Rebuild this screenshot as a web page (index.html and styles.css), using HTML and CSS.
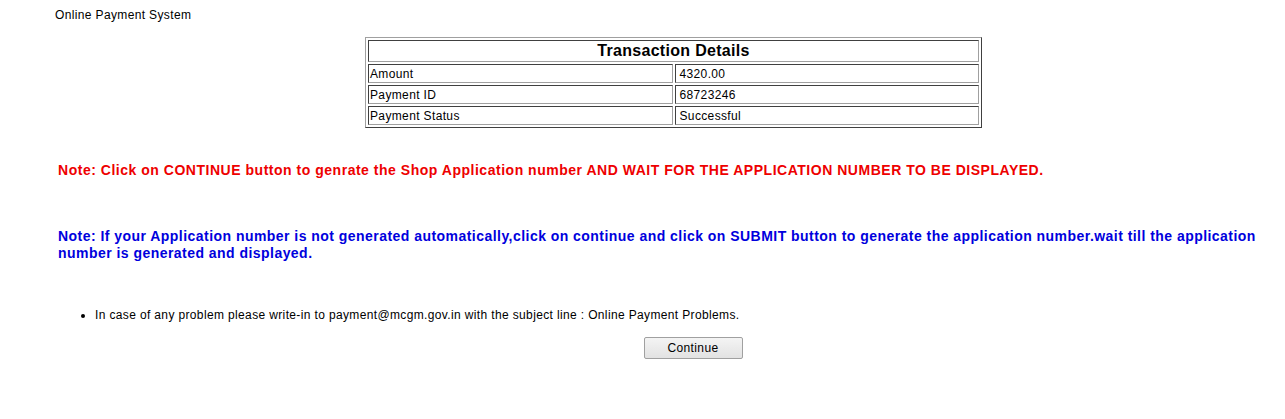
FILE: index.html
```html
<!DOCTYPE html>
<html>
<head>
<meta charset="utf-8">
<title>Online Payment System</title>
<link rel="stylesheet" href="styles.css">
</head>
<body>
<div class="page">
  <div class="header">Online Payment System</div>
  <div class="table-wrap">
    <table class="details">
      <tr><th colspan="2" class="title">Transaction Details</th></tr>
      <tr><td class="label">Amount</td><td class="value">4320.00</td></tr>
      <tr><td class="label">Payment ID</td><td class="value">68723246</td></tr>
      <tr><td class="label">Payment Status</td><td class="value">Successful</td></tr>
    </table>
  </div>
  <p class="note red">Note: Click on CONTINUE button to genrate the Shop Application number AND WAIT FOR THE APPLICATION NUMBER TO BE DISPLAYED.</p>
  <p class="note blue">Note: If your Application number is not generated automatically,click on continue and click on SUBMIT button to generate the application number.wait till the application number is generated and displayed.</p>
  <ul class="info">
    <li>In case of any problem please write-in to payment@mcgm.gov.in with the subject line : Online Payment Problems.</li>
  </ul>
  <div class="actions"><button class="btn">Continue</button></div>
</div>
</body>
</html>
```
FILE: styles.css
```css
html, body {
  margin: 0;
  padding: 0;
  background: #ffffff;
}
body {
  font-family: "Liberation Sans", Arial, sans-serif;
  font-size: 12px;
  letter-spacing: 0.36px;
  color: #000;
}
.page {
  padding: 8px 20px 0 55px;
}
.header {
  font-size: 12px;
  line-height: 14px;
}
.table-wrap {
  display: flex;
  justify-content: center;
  margin-top: 15px;
}
.details {
  width: 617px;
  border-collapse: separate;
  border-spacing: 2px;
  border: 1px solid;
  border-color: #a0a0a0 #404040 #404040 #a0a0a0;
  margin-left: 27px;
  table-layout: fixed;
}
.details th, .details td {
  border: 1px solid;
  border-color: #404040 #a0a0a0 #a0a0a0 #404040;
  padding: 1px 1px 0;
  text-align: left;
  font-weight: normal;
  height: 16px;
  line-height: 16px;
}
.details th.title {
  text-align: center;
  font-weight: bold;
  font-size: 16px;
  letter-spacing: 0.3px;
  padding: 0 1px;
  height: 20px;
  line-height: 20px;
}
.details td.value { padding-left: 4px; }
.note {
  font-weight: bold;
  font-size: 14px;
  line-height: 17px;
  letter-spacing: 0.52px;
  margin: 0;
  padding-left: 3px;
}
.red {
  color: #ee0000;
  margin-top: 34px;
}
.blue {
  color: #0000dd;
  margin-top: 49px;
  margin-right: -12px;
  letter-spacing: 0.46px;
}
.info {
  margin: 46px 0 0 0;
  padding-left: 40px;
  line-height: 14px;
}
.actions {
  display: flex;
  justify-content: center;
  margin-top: 15px;
}
.btn {
  width: 99px;
  height: 22px;
  font-family: "Liberation Sans", Arial, sans-serif;
  font-size: 12px;
  letter-spacing: 0.36px;
  background: linear-gradient(#f4f4f4, #e2e2e2);
  border: 1px solid #a0a0a0;
  border-radius: 2px;
  margin-left: 66px;
  color: #000;
  padding: 0;
}
```
